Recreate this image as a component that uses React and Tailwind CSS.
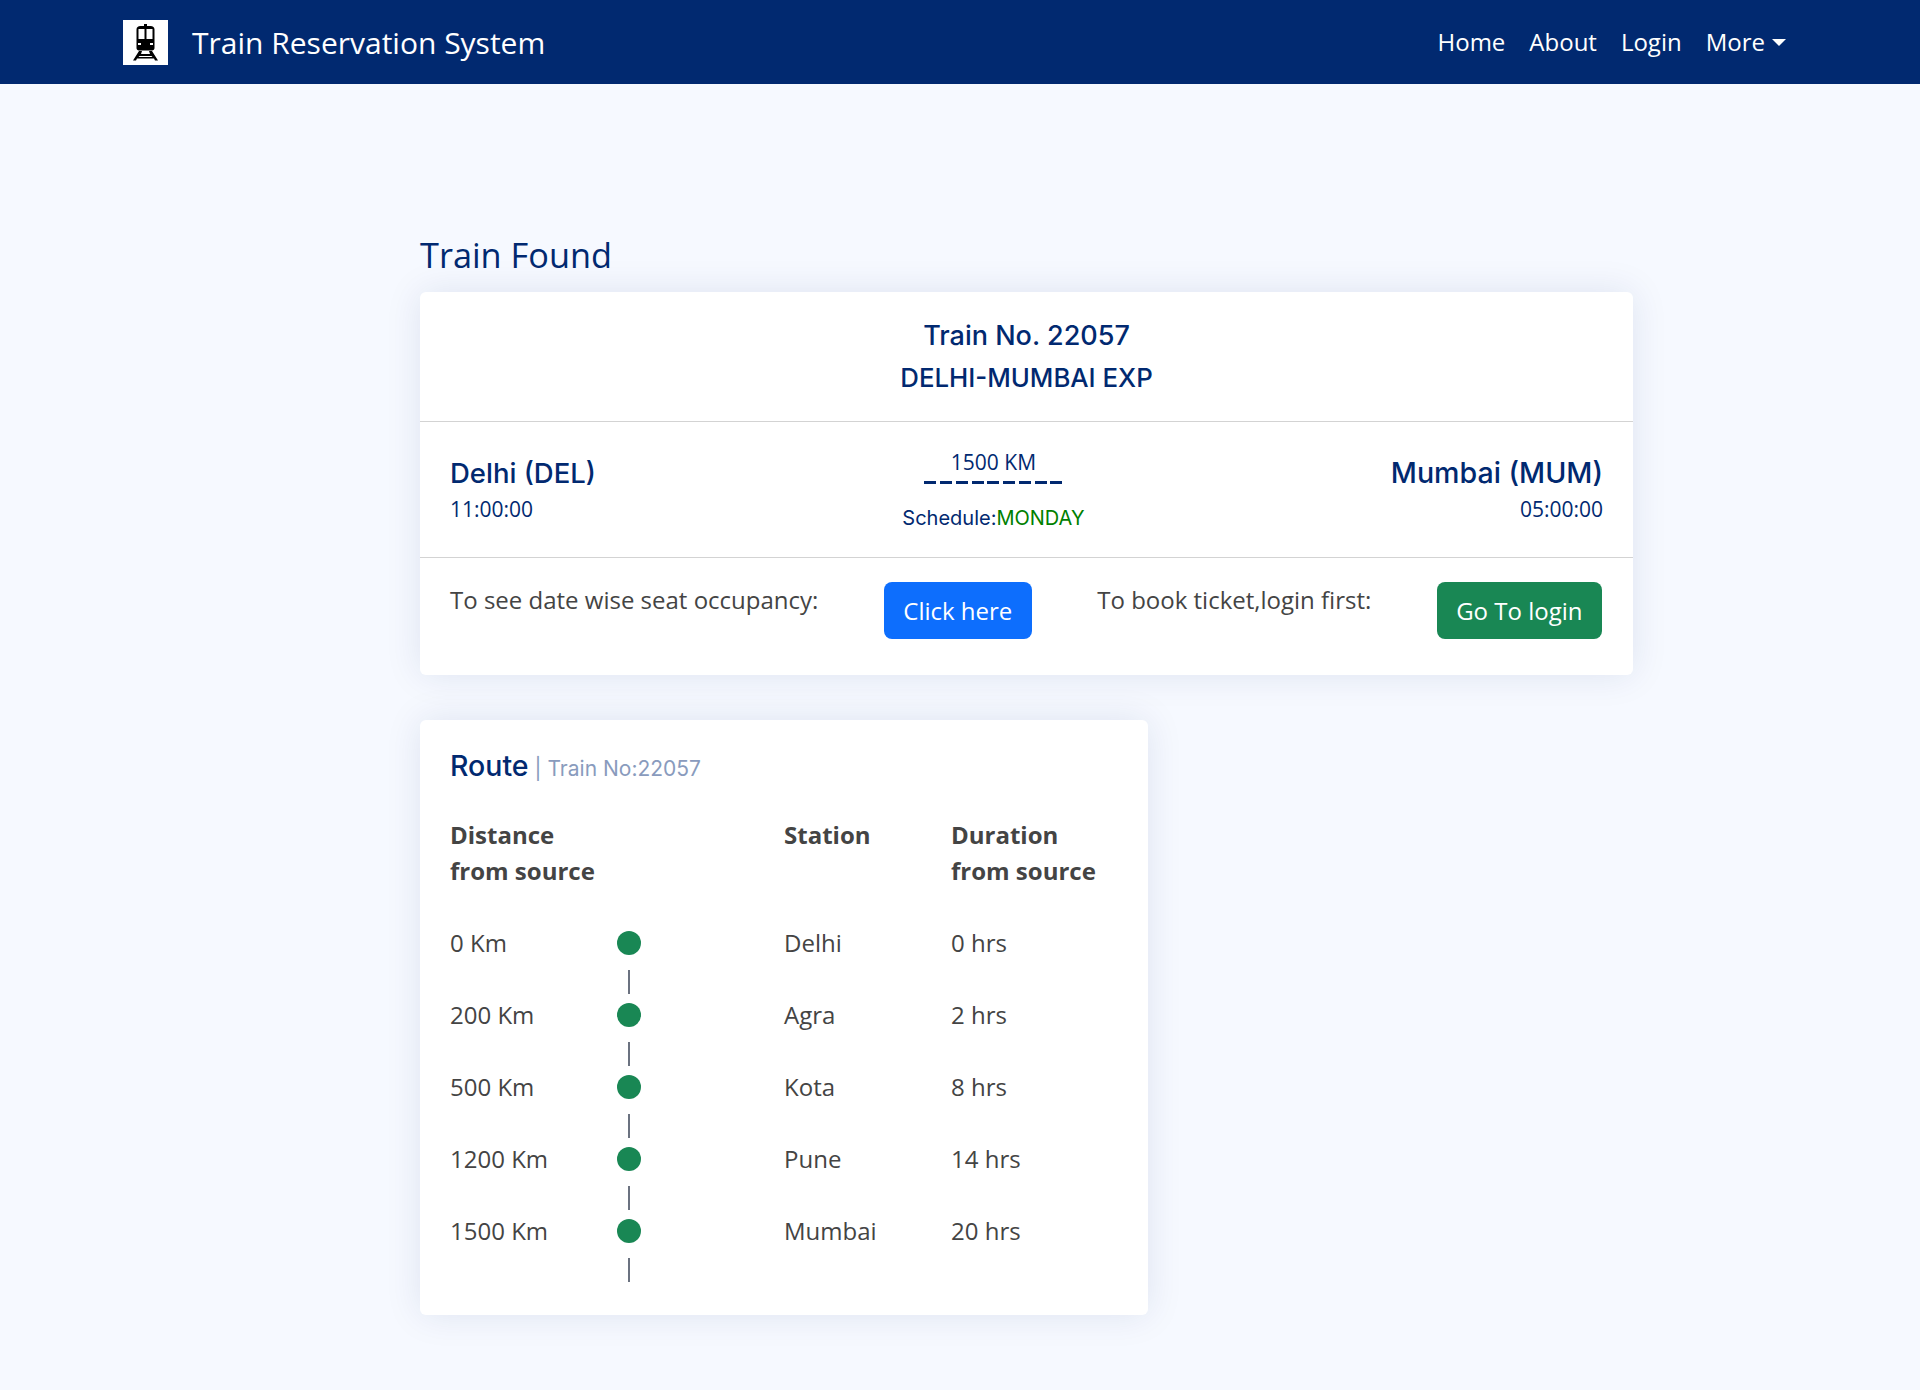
import React from "react";

const stops = [
  { km: "0 Km", station: "Delhi", hrs: "0 hrs" },
  { km: "200 Km", station: "Agra", hrs: "2 hrs" },
  { km: "500 Km", station: "Kota", hrs: "8 hrs" },
  { km: "1200 Km", station: "Pune", hrs: "14 hrs" },
  { km: "1500 Km", station: "Mumbai", hrs: "20 hrs" },
];

const dashes = [0, 1, 2, 3, 4, 5, 6, 7, 8];

const TrainLogo = () => (
  <svg viewBox="0 0 45 45" className="w-[45px] h-[45px]">
    <rect width="45" height="45" fill="#fff" />
    <path d="M21 4h3v2h3.500c2.500 0 4 1.500 4 3.500V28c0 1.500-1 2.500-2.500 2.500h-13c-1.500 0-2.500-1-2.500-2.500V9.500c0-2 1.500-3.500 4-3.500H21z" fill="#000" />
    <rect x="15.500" y="9" width="6" height="10" fill="#fff" />
    <rect x="23.500" y="9" width="6" height="10" fill="#fff" />
    <rect x="15" y="23" width="3" height="2" fill="#fff" />
    <rect x="27" y="23" width="3" height="2" fill="#fff" />
    <path d="M16 31h3l-1 3h9l-1-3h3l6 9.500h-3l-1-2H14l-1 2h-3zM16.500 36l-1 1h14l-1-1z" fill="#000" />
  </svg>
);

export default function App() {
  return (
    <div className="min-h-[1390px] bg-[#f6f9ff] text-[#444444] font-['Open_Sans',sans-serif] text-[19.2px]">
      {/* Navbar */}
      <nav className="h-[84px] bg-[#012970] flex items-center justify-between pl-[123px] pr-[134px]">
        <div className="flex items-center gap-6">
          <TrainLogo />
          <span className="text-white text-[30px]">Train Reservation System</span>
        </div>
        <div className="flex items-center gap-6 text-white text-[24px]">
          <a>Home</a>
          <a>About</a>
          <a>Login</a>
          <a className="flex items-center gap-[7px]">
            More
            <span className="border-x-[7px] border-t-[7px] border-x-transparent border-t-white"></span>
          </a>
        </div>
      </nav>

      <main className="w-[1213px] ml-[420px] pt-[149px]">
        <h1 className="text-[#012970] text-[34.300px] leading-[43px] mb-[16px]">Train Found</h1>

        {/* Train card */}
        <div className="bg-white rounded-[6px] shadow-[0_0_36px_rgba(1,41,112,0.1)] h-[383px]">
          <div className="h-[130px] border-b border-[#d3d3d3] pt-[23px] text-center text-[#012970] font-['Inter',sans-serif] font-medium leading-[42px]">
            <div className="text-[27px]">Train No. 22057</div>
            <div className="text-[25.800px]">DELHI-MUMBAI EXP</div>
          </div>

          <div className="h-[136px] border-b border-[#d3d3d3] px-[30px] flex justify-between text-[#012970]">
            <div className="pt-[30px]">
              <div className="font-['Inter',sans-serif] font-medium text-[27.500px] leading-[42px]">Delhi (DEL)</div>
              <div className="text-[21px] leading-[30px]">11:00:00</div>
            </div>
            <div className="pt-[26px] text-center flex flex-col items-center">
              <div className="text-[21px] leading-[28px]">1500 KM</div>
              <div className="w-[138px] flex justify-between mt-[5px]">
                {dashes.map((d) => (
                  <span key={d} className="w-[12px] h-[3px] bg-[#012970]"></span>
                ))}
              </div>
              <div className="mt-[20px] font-['Inter',sans-serif] text-[20px] leading-[28px]">
                Schedule:<span className="text-[#008000]">MONDAY</span>
              </div>
            </div>
            <div className="pt-[30px] text-right">
              <div className="font-['Inter',sans-serif] font-medium text-[28.600px] leading-[42px]">Mumbai (MUM)</div>
              <div className="text-[21px] leading-[30px]">05:00:00</div>
            </div>
          </div>

          <div className="pl-[30px] pr-[31px] pt-[24px] flex justify-between items-start">
            <div className="text-[24px] leading-[36px] text-[#444444]">To see date wise seat occupancy:</div>
            <button className="h-[57px] px-[19.500px] rounded-[8px] bg-[#0d6efd] text-white text-[24px]">Click here</button>
            <div className="text-[24px] leading-[36px] text-[#444444]">To book ticket,login first:</div>
            <button className="h-[57px] px-[19.500px] rounded-[8px] bg-[#198754] text-white text-[24px]">Go To login</button>
          </div>
        </div>

        {/* Route card */}
        <div className="w-[728px] h-[595px] mt-[45px] bg-white rounded-[6px] shadow-[0_0_36px_rgba(1,41,112,0.1)] px-[30px] pt-[25px]">
          <div className="flex items-baseline gap-[6px] leading-[42px]">
            <span className="text-[#012970] font-['Inter',sans-serif] font-medium text-[28.500px]">Route</span>
            <span className="text-[#899bbd] font-['Inter',sans-serif] text-[21px]">| Train No:22057</span>
          </div>

          <div className="mt-[27px] grid grid-cols-[334px_167px_1fr] text-[24px] leading-[36px] font-bold">
            <div>Distance<br />from source</div>
            <div>Station</div>
            <div>Duration<br />from source</div>
          </div>

          <div className="mt-[36px]">
            {stops.map((stop) => (
              <div key={stop.km} className="grid grid-cols-[167px_167px_167px_1fr] h-[72px] text-[24px]">
                <div className="leading-[36px]">{stop.km}</div>
                <div className="flex flex-col">
                  <div className="w-6 h-6 mt-[6px] rounded-full bg-[#198754]"></div>
                  <div className="w-[2px] h-6 ml-[11px] mt-[15px] bg-[#6b7280]"></div>
                </div>
                <div className="leading-[36px]">{stop.station}</div>
                <div className="leading-[36px]">{stop.hrs}</div>
              </div>
            ))}
          </div>
        </div>
      </main>
    </div>
  );
}
